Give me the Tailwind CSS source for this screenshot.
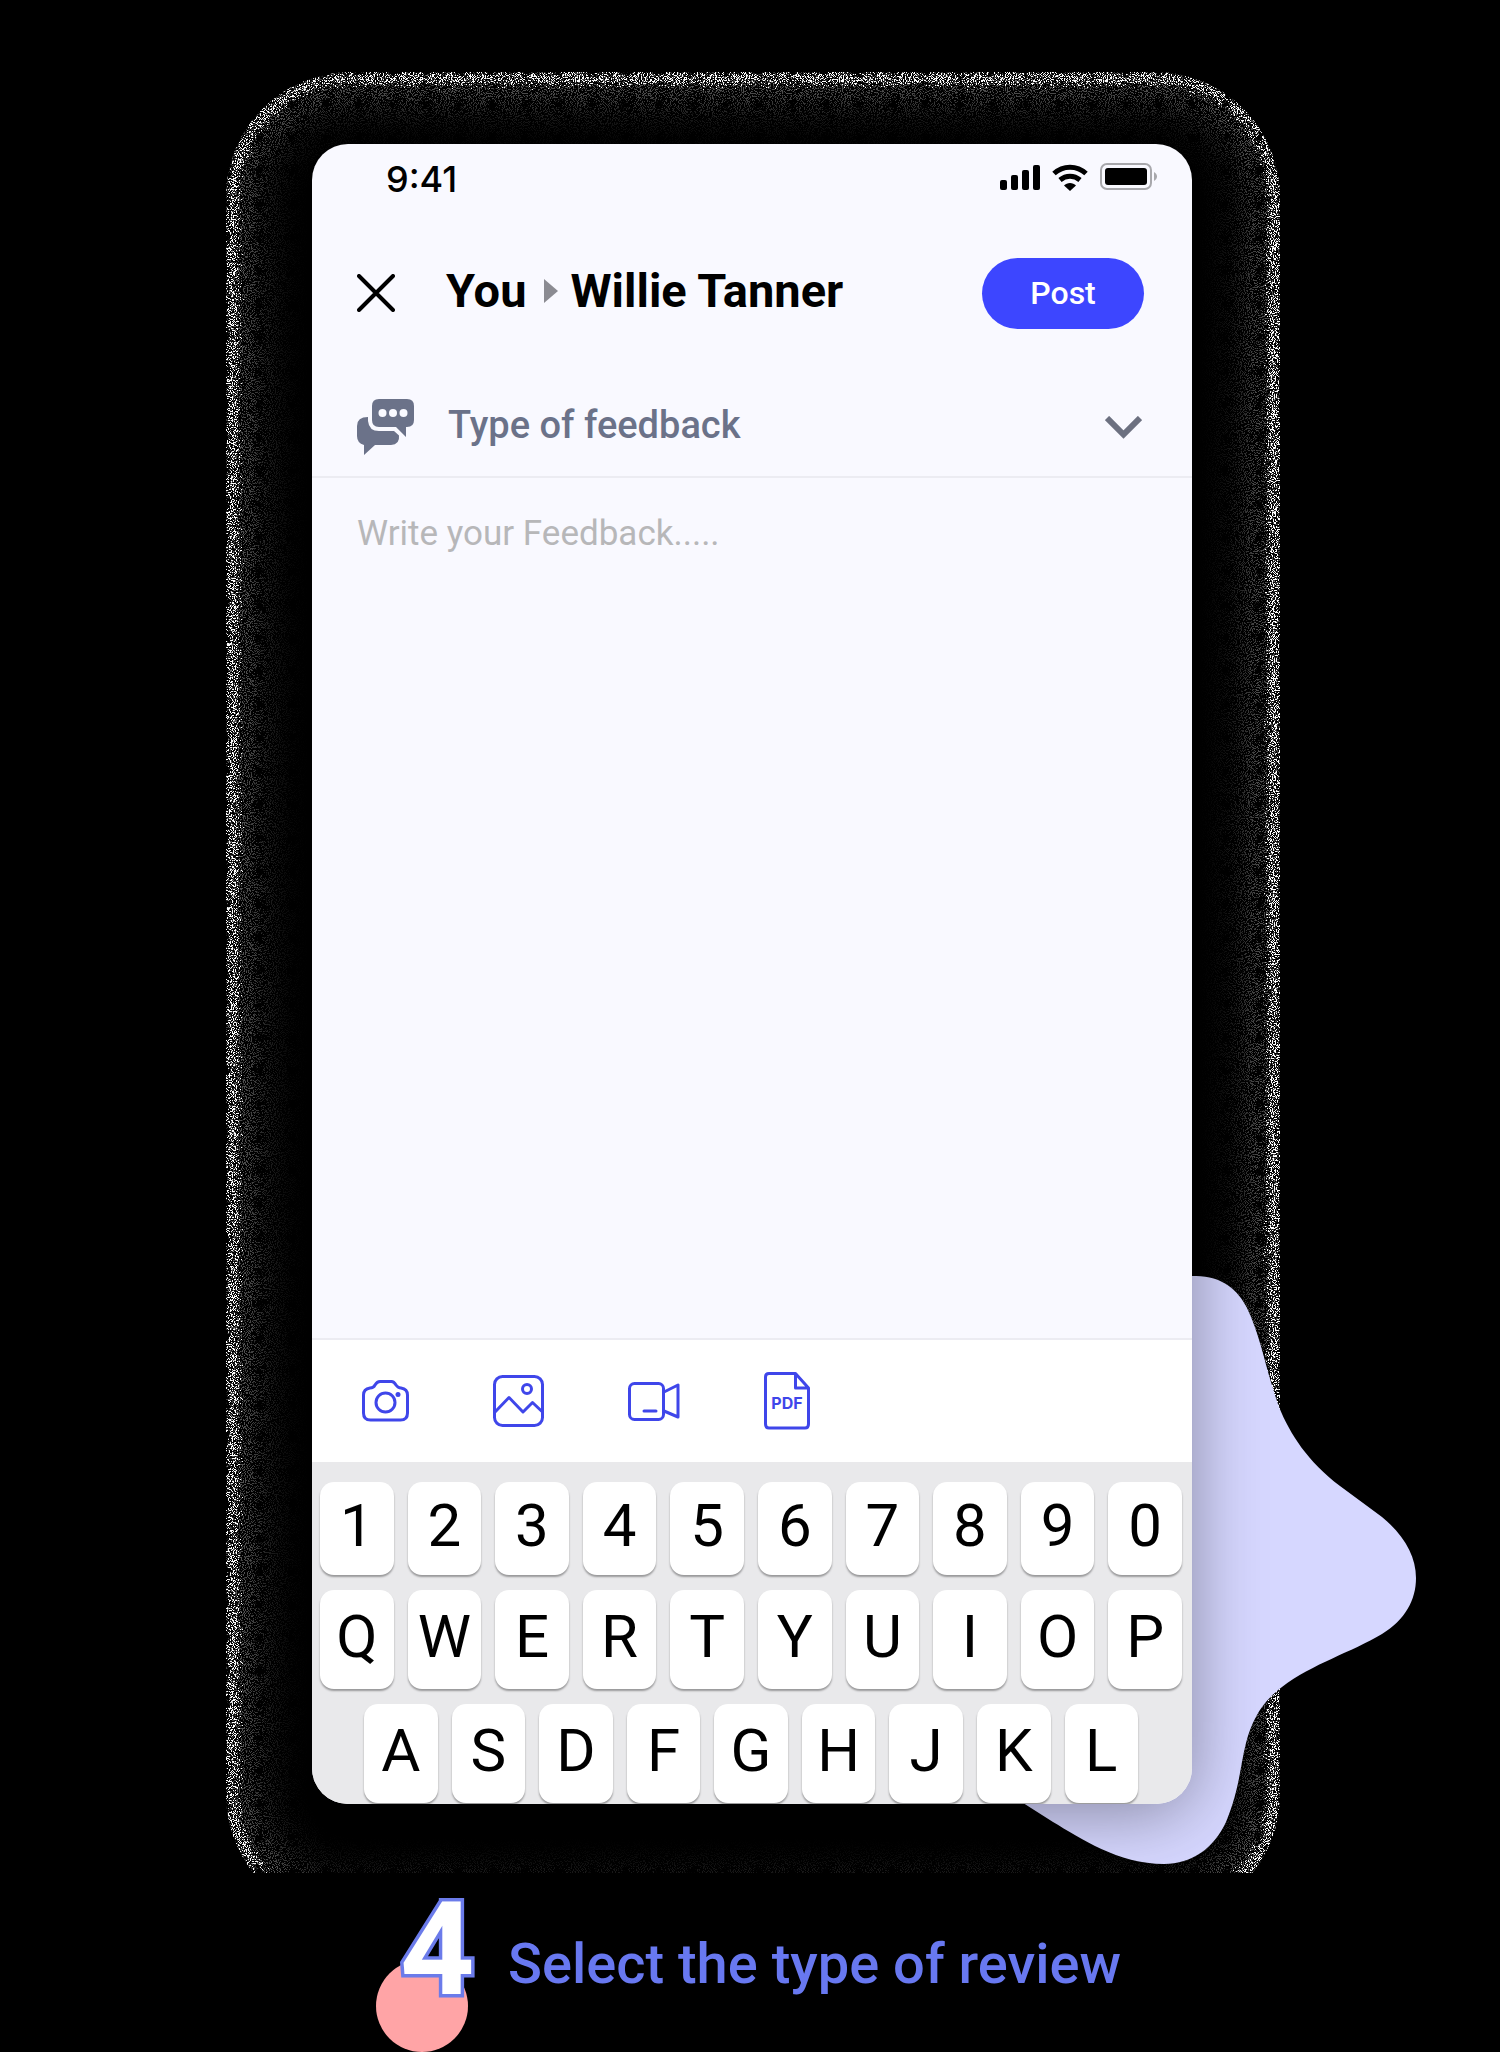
<!DOCTYPE html>
<html lang="en">
<head>
<meta charset="utf-8">
<meta name="viewport" content="width=device-width, initial-scale=1">
<title>Write feedback</title>
<script src="https://cdn.jsdelivr.net/npm/@tailwindcss/browser@4"></script>
</head>
<body class="min-h-screen bg-black font-['Roboto',sans-serif] overflow-x-hidden">
<main class="pl-1 pt-36">
  <div class="relative mx-auto w-full max-w-[880px]">

    <!-- Grainy halo round the screen -->
    <svg class="pointer-events-none absolute -left-[86px] -top-18 h-[calc(100%+141px)] w-[calc(100%+174px)]" aria-hidden="true">
      <defs>
        <filter id="grain-hard" filterUnits="userSpaceOnUse" x="0" y="0" width="100%" height="100%" color-interpolation-filters="sRGB">
          <feTurbulence type="fractalNoise" baseFrequency="0.97" numOctaves="2" seed="4" result="n"/>
          <feColorMatrix in="n" type="matrix" values="0 0 0 0 1  0 0 0 0 1  0 0 0 0 1  40 0 0 0 -21.6" result="m"/>
          <feDisplacementMap in="SourceGraphic" in2="n" scale="20" xChannelSelector="G" yChannelSelector="B" result="d"/>
          <feComposite in="m" in2="d" operator="in"/>
        </filter>
        <filter id="grain-soft" filterUnits="userSpaceOnUse" x="0" y="0" width="100%" height="100%" color-interpolation-filters="sRGB">
          <feTurbulence type="fractalNoise" baseFrequency="0.97" numOctaves="2" seed="9" result="n"/>
          <feColorMatrix in="n" type="matrix" values="0 0 0 0 1  0 0 0 0 1  0 0 0 0 1  14 0 0 0 -7.4" result="m"/>
          <feGaussianBlur in="SourceGraphic" stdDeviation="14" result="b"/>
          <feComposite in="m" in2="b" operator="in"/>
        </filter>
        <clipPath id="halo-shape"><rect x="0" y="0" width="100%" height="calc(100% + 47px)" rx="125"/></clipPath>
      </defs>
      <g clip-path="url(#halo-shape)">
        <g filter="url(#grain-soft)">
          <rect x="30" y="30" width="calc(100% - 60px)" height="calc(100% - 13px)" rx="95" fill="none" stroke="#fff" stroke-opacity=".1" stroke-width="60"/>
          <rect x="12" y="12" width="calc(100% - 24px)" height="calc(100% + 23px)" rx="113" fill="none" stroke="#fff" stroke-opacity=".36" stroke-width="30"/>
        </g>
        <g filter="url(#grain-hard)">
          <rect x="6" y="6" width="calc(100% - 12px)" height="calc(100% + 35px)" rx="119" fill="none" stroke="#fff" stroke-width="12"/>
        </g>
      </g>
    </svg>

    <!-- Lavender blob -->
    <svg class="pointer-events-none absolute -bottom-[61px] -right-56 h-[590px] w-[400px]" viewBox="1016 1275 400 590" aria-hidden="true">
      <path fill="#d6d7ff" d="M1150 1276H1196C1222 1276 1238 1290 1247 1308C1262 1340 1264 1364 1279 1407C1290 1434 1308 1462 1340 1486L1382 1517C1404 1535 1416 1556 1416 1578C1416 1600 1405 1620 1382 1634C1352 1652 1312 1664 1282 1687C1262 1702 1252 1720 1246 1743C1240 1766 1240 1788 1226 1822C1214 1848 1192 1864 1164 1864C1118 1864 1080 1838 1053 1822L1020 1801Z"/>
    </svg>

    <section class="relative overflow-hidden rounded-[36px] bg-[#f9f9ff] shadow-[0_8px_70px_rgba(0,0,0,0.38)]" aria-label="New feedback">
      <!-- Status bar -->
      <div class="flex h-16 items-center justify-between pl-[74px] pr-[34px] pt-1.5">
        <span class="font-['Inter',sans-serif] text-[36px] leading-10 font-medium">9:41</span>
        <div class="flex h-8 items-center gap-3 pb-1">
          <svg class="h-7 w-10" viewBox="0 0 40 28" aria-hidden="true"><rect y="17" width="7" height="10" rx="2"/><rect x="11" y="12" width="7" height="15" rx="2"/><rect x="22" y="7" width="7" height="20" rx="2"/><rect x="33" y="2" width="7" height="25" rx="2"/></svg>
          <svg class="h-7 w-9" viewBox="0 0 36 28" aria-hidden="true"><g fill="none" stroke="#000" stroke-width="5"><path d="M2 10.500C11 2 25 2 34 10.500"/><path d="M8 17C14 12 22 12 28 17"/></g><path d="M12 22.500C15 19 21 19 24 22.500L18 28Z"/></svg>
          <svg class="h-7 w-[58px]" viewBox="0 0 58 28" aria-hidden="true"><rect x="1" y="1" width="50" height="25" rx="6" fill="none" stroke="#a8a8ac" stroke-width="2"/><rect x="5" y="5" width="42" height="17" rx="3"/><path d="M54 9C58 11 58 16 54 18Z" fill="#a8a8ac"/></svg>
        </div>
      </div>

      <!-- Header -->
      <header class="flex h-[170px] items-center pl-[45px] pr-12">
        <button type="button" aria-label="Close" class="mr-[51px] shrink-0"><svg class="size-[38px]" viewBox="0 0 38 38" fill="none" stroke="#000" stroke-width="4" stroke-linecap="round"><path d="M2 2L36 36M36 2L2 36"/></svg></button>
        <h1 class="flex grow items-center pb-1 text-[47px] leading-[56px] font-bold whitespace-nowrap">You<svg class="mr-3 ml-[18px] h-6 w-[14px]" viewBox="0 0 14 24" role="img" aria-label="to"><path d="M0 0L14 12L0 24Z" fill="#8b8b92"/></svg>Willie Tanner</h1>
        <button type="button" class="h-[71px] w-[162px] shrink-0 rounded-full bg-[#3d46ff] text-[32px] leading-10 font-medium text-white">Post</button>
      </header>

      <!-- Feedback type -->
      <div class="flex h-[100px] items-center border-b-2 border-[#ececf2] pl-[45px] pr-[50px]">
        <svg class="mr-[34px] h-14 w-[57px] shrink-0" viewBox="0 0 57 56" fill="#6b7289" aria-hidden="true"><path d="M22 0H50Q57 0 57 7V21Q57 28 50 28H49V38L39 28H22Q15 28 15 21V7Q15 0 22 0Z"/><path d="M11 18V22Q12 32 22 32H37L42 36.500Q43 45.500 34 46H18L7 56V46Q0 44 0 37V27Q0 18 11 18Z"/><g fill="#f9f9ff"><circle cx="25.500" cy="14" r="4"/><circle cx="36" cy="14" r="4"/><circle cx="46.500" cy="14" r="4"/></g></svg>
        <select aria-label="Type of feedback" class="h-full grow appearance-none bg-transparent pb-1 text-[38px] font-medium text-[#6b7289]"><option>Type of feedback</option></select>
        <svg class="pointer-events-none h-[23px] w-[37px] shrink-0" viewBox="0 0 37 23" fill="none" stroke="#6c7080" stroke-width="6" aria-hidden="true"><path d="M2 2L18.500 18.500L35 2"/></svg>
      </div>

      <textarea aria-label="Feedback" placeholder="Write your Feedback....." class="block h-[860px] w-full resize-none px-[45px] py-8 text-[35px] leading-12 placeholder:text-[#b7b7b9]"></textarea>

      <!-- Attachments -->
      <div class="flex h-[124px] items-center gap-[84px] border-t-2 border-[#ececf2] bg-white pl-[50px]">
        <button type="button" aria-label="Camera"><svg class="h-[42px] w-[47px]" viewBox="0 0 47 42" fill="none" stroke="#3f46ea" stroke-width="3"><path d="M1.500 15Q1.500 9 8 8Q11.500 8 13 5Q15 1.500 18 1.500H29.500Q32 1.500 34 5Q36 8 39 8Q45.500 9 45.500 15V33Q45.500 40 38.500 40H8.500Q1.500 40 1.500 33Z"/><circle cx="23.500" cy="22.500" r="9.500"/><circle cx="36" cy="14.500" r="2.500" fill="#3f46ea" stroke="none"/></svg></button>
        <button type="button" aria-label="Picture"><svg class="h-[52px] w-[51px]" viewBox="0 0 51 52" fill="none" stroke="#3f46ea" stroke-width="3" stroke-linejoin="round"><rect x="1.500" y="1.500" width="48" height="49" rx="8"/><circle cx="34" cy="14" r="4.500"/><path d="M2 37L16 22.500L30 37L39.500 27.500L49 36.500"/></svg></button>
        <button type="button" aria-label="Video"><svg class="h-[39px] w-[52px]" viewBox="0 0 52 39" fill="none" stroke="#3f46ea" stroke-width="3" stroke-linejoin="round"><rect x="1.500" y="1.500" width="34" height="36" rx="5"/><path d="M36 10L50 3V35L36 29M16 29H28" stroke-linecap="round"/></svg></button>
        <button type="button" aria-label="PDF file"><svg class="h-[58px] w-[46px]" viewBox="0 0 46 58" fill="none" stroke="#3f46ea" stroke-width="3" stroke-linejoin="round"><path d="M5 1.500H31.500L44.500 16V52Q44.500 56 41 56H5Q1.500 56 1.500 52V5Q1.500 1.500 5 1.500ZM31.500 1.500V16H44.500"/><text x="23" y="37" text-anchor="middle" class="font-['Inter',sans-serif] text-[16px] font-bold" fill="#3f46ea" stroke="none">PDF</text></svg></button>
      </div>

      <!-- Keyboard -->
      <div class="flex flex-col gap-[15px] bg-[#e9e9eb] pt-5 pr-[10px] pb-px pl-2 text-[60px] leading-none" id="keyboard"></div>
    </section>
  </div>

  <!-- Step caption -->
  <div class="mx-auto flex w-full max-w-[880px] items-end pl-16 pt-[94px]">
    <div class="relative h-[154px] w-[132px]">
      <span class="absolute bottom-0 left-0 size-[92px] rounded-full bg-[#ffa4a6]"></span>
      <span class="relative block pl-6 text-[130px] leading-[104px] font-bold text-white [-webkit-text-stroke:7px_#6b7bea] [paint-order:stroke_fill]">4</span>
    </div>
    <h2 class="pb-[53px] text-[56px] leading-[70px] font-medium whitespace-nowrap text-[#6878f0]">Select the type of review</h2>
  </div>
</main>
<script>
const rows = [["1234567890", "h-[93px]", "px-0"], ["QWERTYUIOP", "h-[99px]", "px-0"], ["ASDFGHJKL", "h-[99px]", "px-11"]];
document.getElementById("keyboard").innerHTML = rows.map(([keys, h, px]) =>
  `<div class="flex gap-[14px] ${px}">` + [...keys].map(k =>
    `<button type="button" class="${h} min-w-0 flex-1 rounded-[14px] bg-white pb-1.5 shadow-[0_2px_2px_rgba(0,0,0,0.35)]">${k}</button>`).join("") + `</div>`).join("");
</script>
</body>
</html>
